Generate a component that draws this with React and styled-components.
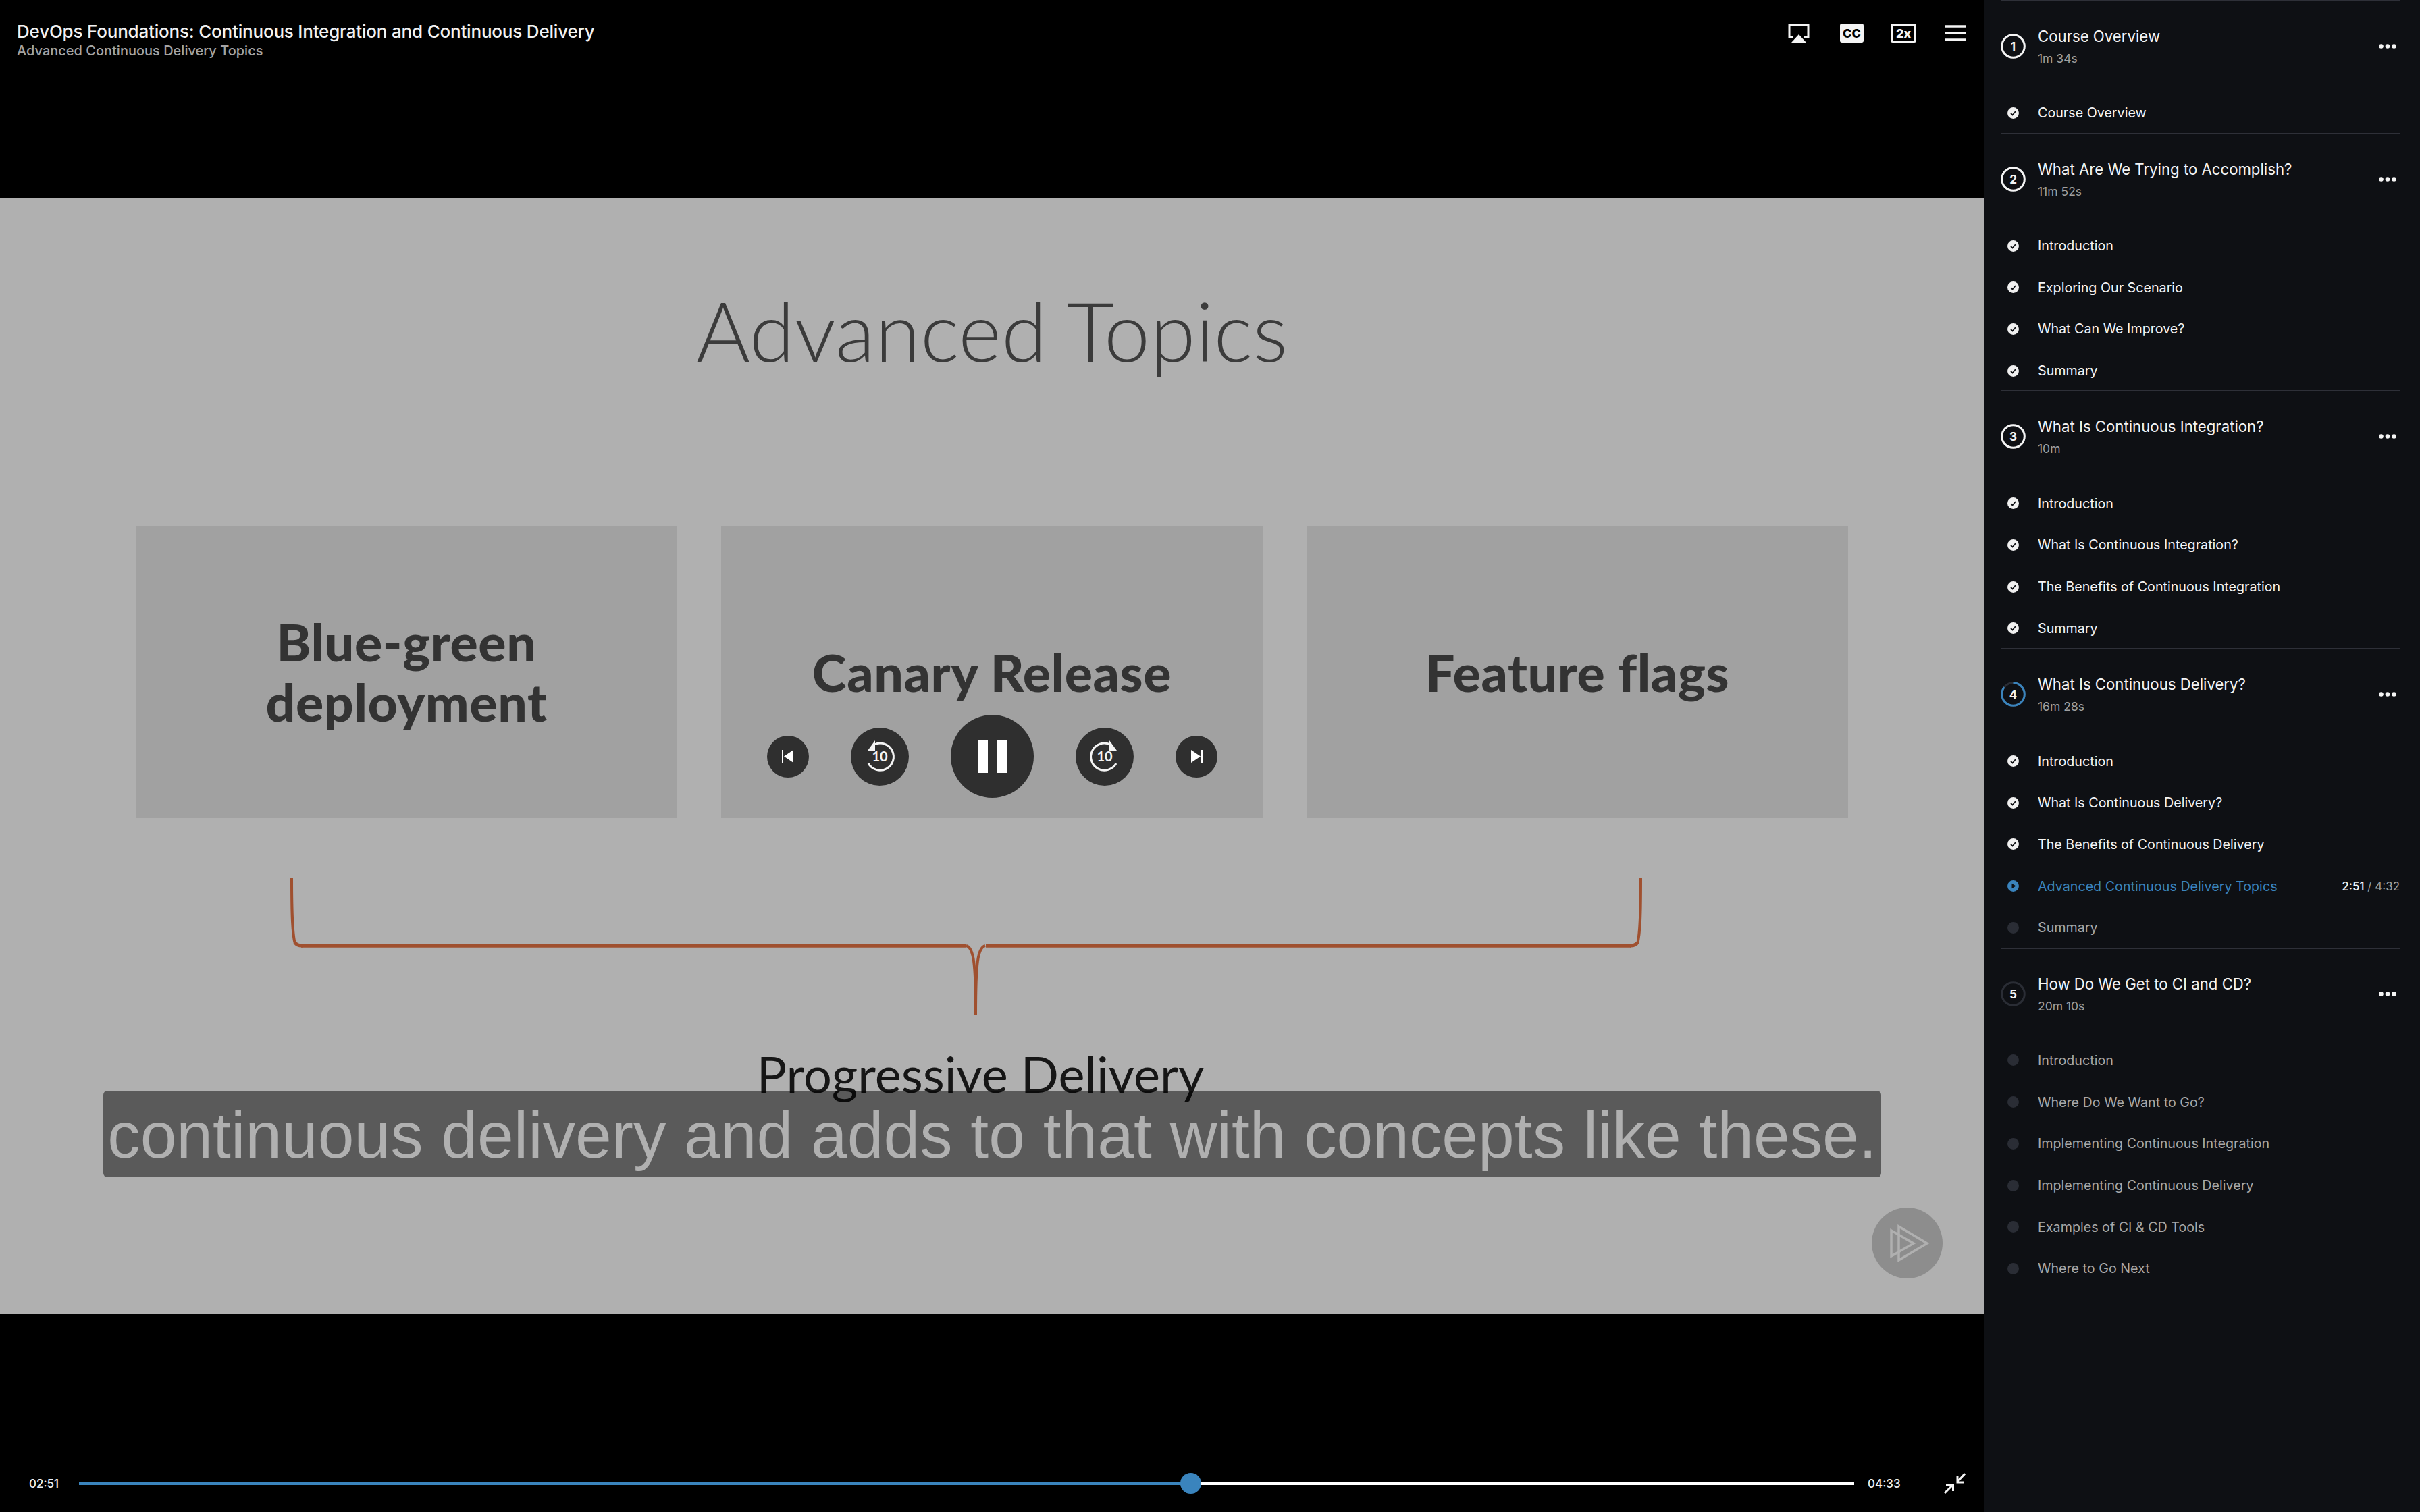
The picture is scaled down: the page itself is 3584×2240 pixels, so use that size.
import React from "react";
import styled, { createGlobalStyle } from "styled-components";

const Global = createGlobalStyle`
  html, body { margin: 0; padding: 0; background: #000; }
  * { box-sizing: border-box; }
`;

const modules = [
  { n: 1, title: "Course Overview", time: "1m 34s", ring: 1, lessons: [["Course Overview", "done"]] },
  { n: 2, title: "What Are We Trying to Accomplish?", time: "11m 52s", ring: 1, lessons: [["Introduction", "done"], ["Exploring Our Scenario", "done"], ["What Can We Improve?", "done"], ["Summary", "done"]] },
  { n: 3, title: "What Is Continuous Integration?", time: "10m", ring: 1, lessons: [["Introduction", "done"], ["What Is Continuous Integration?", "done"], ["The Benefits of Continuous Integration", "done"], ["Summary", "done"]] },
  { n: 4, title: "What Is Continuous Delivery?", time: "16m 28s", ring: 0.85, color: "#3a84bd", lessons: [["Introduction", "done"], ["What Is Continuous Delivery?", "done"], ["The Benefits of Continuous Delivery", "done"], ["Advanced Continuous Delivery Topics", "current"], ["Summary", "todo"]] },
  { n: 5, title: "How Do We Get to CI and CD?", time: "20m 10s", ring: 0, lessons: [["Introduction", "todo"], ["Where Do We Want to Go?", "todo"], ["Implementing Continuous Integration", "todo"], ["Implementing Continuous Delivery", "todo"], ["Examples of CI & CD Tools", "todo"], ["Where to Go Next", "todo"]] },
];

const Page = styled.div`
  display: grid;
  grid-template-columns: 2938px 646px;
  width: 3584px;
  height: 2240px;
  overflow: hidden;
  background: #000;
  font-family: Inter, "Liberation Sans", sans-serif;
`;
const Main = styled.main`
  display: flex;
  flex-direction: column;
  min-width: 0;
`;
const Header = styled.header`
  height: 294px;
  flex: none;
  display: flex;
  justify-content: space-between;
  align-items: flex-start;
  padding: 32px 27px 0 25px;
`;
const CourseTitle = styled.div`
  color: #f2f2f2;
  font-size: 26px;
  font-weight: 500;
  line-height: 30px;
  letter-spacing: -0.2px;
`;
const ClipTitle = styled.div`
  color: #a3a3a3;
  font-size: 20px;
  font-weight: 500;
  line-height: 22px;
  margin-top: 2px;
`;
const Tools = styled.div`
  display: flex;
  align-items: center;
  margin-top: 3px;
`;
const ToolSlot = styled.div`
  display: flex;
  margin-left: ${(p) => p.$gap}px;
`;
const Badge = styled.div`
  width: ${(p) => p.$w}px;
  height: 28px;
  border-radius: 3px;
  border: 3px solid #f4f4f4;
  background: ${(p) => (p.$solid ? "#f4f4f4" : "transparent")};
  color: ${(p) => (p.$solid ? "#000" : "#f4f4f4")};
  font-size: 18px;
  font-weight: 800;
  display: flex;
  align-items: center;
  justify-content: center;
`;
const Slide = styled.section`
  position: relative;
  height: 1653px;
  flex: none;
  background: #b0b0b0;
  padding-top: 130px;
  font-family: Lato, "Liberation Sans", sans-serif;
`;
const SlideTitle = styled.h1`
  margin: 0;
  height: 356px;
  text-align: center;
  font-size: 122px;
  font-weight: 300;
  line-height: 130px;
  color: #3b3b3b;
`;
const Cards = styled.div`
  display: grid;
  grid-template-columns: repeat(3, 802px);
  gap: 65px;
  padding-left: 201px;
`;
const Card = styled.div`
  height: 432px;
  background: #a1a1a1;
  color: #333;
  display: flex;
  align-items: center;
  justify-content: center;
  text-align: center;
  font-size: 77px;
  font-weight: 900;
  letter-spacing: 0.6px;
  line-height: 89px;
  padding-bottom: 2px;
`;
const Brace = styled.svg`
  display: block;
  margin: 84px 0 0 420px;
`;
const Progressive = styled.div`
  text-align: center;
  margin: 44px 0 0 -34px;
  color: #161616;
  font-size: 74px;
  line-height: 86px;
  font-weight: 400;
`;
const Controls = styled.div`
  position: absolute;
  left: 1136px;
  top: 765px;
  height: 123px;
  display: flex;
  align-items: center;
  gap: 62px;
`;
const RoundButton = styled.div`
  width: ${(p) => p.$d}px;
  height: ${(p) => p.$d}px;
  border-radius: 50%;
  background: #2f2f2f;
  display: flex;
  align-items: center;
  justify-content: center;
  gap: 13px;
`;
const PauseBar = styled.span`
  width: 15px;
  height: 49px;
  background: #fff;
`;
const Caption = styled.div`
  position: absolute;
  left: 153px;
  top: 1322px;
  width: 2633px;
  height: 128px;
  border-radius: 6px;
  background: rgba(0, 0, 0, 0.49);
  color: #b0b0b0;
  font-family: "Liberation Sans", Arial, sans-serif;
  font-size: 96.6px;
  line-height: 131px;
  text-align: center;
  white-space: nowrap;
`;
const Logo = styled.svg`
  position: absolute;
  left: 2772px;
  top: 1495px;
`;
const Footer = styled.footer`
  flex: 1;
  display: flex;
  align-items: flex-start;
  padding: 235px 27px 0 43px;
`;
const Row = styled.div`
  display: flex;
  align-items: center;
  height: 31px;
  width: 100%;
`;
const Stamp = styled.span`
  color: #f0f0f0;
  font-size: 17px;
  font-weight: 500;
  width: ${(p) => p.$w}px;
  flex: none;
`;
const Track = styled.div`
  position: relative;
  flex: 1;
  height: 4px;
  background: #fff;
  margin-right: 20px;
`;
const Fill = styled.div`
  height: 100%;
  background: #3a84bd;
`;
const Thumb = styled.div`
  position: absolute;
  top: -14px;
  width: 31px;
  height: 31px;
  margin-left: -16px;
  border-radius: 50%;
  background: #3a84bd;
`;
const Sidebar = styled.aside`
  background: #0e1014;
  padding: 0 30px 0 25px;
`;
const Module = styled.section`
  border-top: 2px solid #2e3038;
`;
const ModuleHead = styled.div`
  height: 133px;
  display: flex;
  align-items: center;
`;
const Ring = styled.svg`
  flex: none;
  display: block;
`;
const ModuleText = styled.div`
  flex: 1;
  margin-left: 18px;
`;
const ModuleTitle = styled.div`
  color: #f4f4f4;
  font-size: 22.2px;
  line-height: 30px;
`;
const ModuleTime = styled.div`
  color: #a0a0a0;
  font-size: 17.5px;
  line-height: 22px;
  margin-top: 7px;
`;
const Dots = styled.svg`
  flex: none;
  margin-right: 5px;
`;
const Lesson = styled.div`
  height: 61.7px;
  padding-top: 3px;
  display: flex;
  align-items: center;
  font-size: 19.7px;
  color: ${(p) => (p.$state === "current" ? "#3a84bd" : p.$state === "todo" ? "#a8a8a8" : "#f4f4f4")};
`;
const LessonIcon = styled.svg`
  flex: none;
  margin: 0 28px 0 10px;
`;
const LessonName = styled.span`
  flex: 1;
`;
const Progress = styled.span`
  color: #a0a0a0;
  font-size: 17px;
  b {
    color: #f4f4f4;
    font-weight: 500;
  }
`;

function Airplay() {
  return (
    <svg width="32" height="28" viewBox="0 0 32 28">
      <path d="M8 20H2V2H30V20H24" fill="none" stroke="#f4f4f4" strokeWidth="3" />
      <path d="M16 16L27 28H5Z" fill="#f4f4f4" />
    </svg>
  );
}
function Menu() {
  return (
    <svg width="31" height="24" viewBox="0 0 31 24">
      <path d="M0 2H31M0 12H31M0 22H31" stroke="#f4f4f4" strokeWidth="3.6" />
    </svg>
  );
}
function Collapse() {
  return (
    <svg width="32" height="31" viewBox="0 0 32 31">
      <g fill="none" stroke="#f4f4f4" strokeWidth="3">
        <path d="M31 1L20 13M20 4V14H30" />
        <path d="M1 30L13 18M3 18H13.5V27" />
      </g>
    </svg>
  );
}
function SkipIcon({ flip }) {
  return (
    <svg width="18" height="19" viewBox="0 0 18 19" style={flip ? { transform: "scaleX(-1)" } : undefined}>
      <path d="M0 0H2V19H0ZM17 0V19L3 9.5Z" fill="#fff" />
    </svg>
  );
}
function TenIcon({ flip }) {
  const arc = flip ? "M51 25A20 20 0 1 0 60 53" : "M35 25A20 20 0 1 1 26 53";
  const head = flip ? "M50 19V34H61Z" : "M36 19V34H25Z";
  return (
    <svg width="86" height="86" viewBox="0 0 86 86">
      <path d={arc} fill="none" stroke="#f4f4f4" strokeWidth="3" />
      <path d={head} fill="#f4f4f4" />
      <text x="43" y="50" textAnchor="middle" fontSize="20" fontWeight="700" fontFamily="Lato, sans-serif" fill="#f4f4f4">10</text>
    </svg>
  );
}
function ModuleRing({ n, ring, color }) {
  const r = 16.8;
  const c = 2 * Math.PI * r;
  return (
    <Ring width="37" height="37" viewBox="0 0 37 37">
      <circle cx="18.5" cy="18.5" r={r} fill="none" stroke="#2a2d35" strokeWidth="3" />
      {ring > 0 && (
        <circle cx="18.5" cy="18.5" r={r} fill="none" stroke={color || "#f4f4f4"} strokeWidth="3" strokeDasharray={`${c * ring} ${c}`} transform="rotate(-90 18.5 18.5)" />
      )}
      <text x="18.5" y="24.5" textAnchor="middle" fontSize="17" fontWeight="700" fill="#f4f4f4">{n}</text>
    </Ring>
  );
}
function StateIcon({ state }) {
  return (
    <LessonIcon width="17" height="17" viewBox="0 0 17 17">
      {state === "done" && (
        <>
          <circle cx="8.5" cy="8.5" r="8.5" fill="#f0f0f0" />
          <path d="M5 9L7.5 11.5L12 6" fill="none" stroke="#0e1014" strokeWidth="1.8" />
        </>
      )}
      {state === "current" && (
        <>
          <circle cx="8.5" cy="8.5" r="8.5" fill="#3a84bd" />
          <path d="M6.5 4.8L12.5 8.5L6.5 12.2Z" fill="#0e1014" />
        </>
      )}
      {state === "todo" && <circle cx="8.5" cy="8.5" r="8.5" fill="#2a2d35" />}
    </LessonIcon>
  );
}

export default function App() {
  return (
    <Page>
      <Global />
      <Main>
        <Header>
          <div>
            <CourseTitle>DevOps Foundations: Continuous Integration and Continuous Delivery</CourseTitle>
            <ClipTitle>Advanced Continuous Delivery Topics</ClipTitle>
          </div>
          <Tools>
            <Airplay />
            <ToolSlot $gap={45}><Badge $w={35} $solid>CC</Badge></ToolSlot>
            <ToolSlot $gap={40}><Badge $w={38}>2x</Badge></ToolSlot>
            <ToolSlot $gap={42}><Menu /></ToolSlot>
          </Tools>
        </Header>
        <Slide>
          <SlideTitle>Advanced Topics</SlideTitle>
          <Cards>
            <Card>Blue-green<br />deployment</Card>
            <Card>Canary Release</Card>
            <Card>Feature flags</Card>
          </Cards>
          <Brace width="2024" height="208" viewBox="0 0 2024 208">
            <g fill="none" stroke="#a0502f">
              <path d="M12 5C12 60 13 88 17 102" strokeWidth="4" />
              <path d="M2010 5C2010 60 2009 88 2005 102" strokeWidth="4" />
              <path d="M26 105H1010M1040 105H1996" strokeWidth="5.5" />
              <path d="M17 100Q19 105 28 105M2005 100Q2003 105 1994 105" strokeWidth="5" />
              <path d="M1011 105C1022 108 1025 130 1025 207C1025 130 1028 108 1039 105" strokeWidth="4" />
            </g>
          </Brace>
          <Progressive>Progressive Delivery</Progressive>
          <Controls>
            <RoundButton $d={62}><SkipIcon /></RoundButton>
            <RoundButton $d={86}><TenIcon /></RoundButton>
            <RoundButton $d={123}><PauseBar /><PauseBar /></RoundButton>
            <RoundButton $d={86}><TenIcon flip /></RoundButton>
            <RoundButton $d={62}><SkipIcon flip /></RoundButton>
          </Controls>
          <Caption>continuous delivery and adds to that with concepts like these.</Caption>
          <Logo width="105" height="105" viewBox="0 0 105 105">
            <circle cx="52.5" cy="52.5" r="52.5" fill="#8d8d8d" />
            <g fill="none" stroke="#b0b0b0" strokeWidth="3.5">
              <path d="M40 28L82 53L40 78Z" />
              <path d="M29 34L62 53L29 72Z" />
            </g>
          </Logo>
        </Slide>
        <Footer>
          <Row>
            <Stamp $w={74}>02:51</Stamp>
            <Track>
              <Fill style={{ width: `${(171 / 273) * 100}%` }} />
              <Thumb style={{ left: `${(171 / 273) * 100}%` }} />
            </Track>
            <Stamp $w={113}>04:33</Stamp>
            <Collapse />
          </Row>
        </Footer>
      </Main>
      <Sidebar>
        {modules.map((m) => (
          <Module key={m.n}>
            <ModuleHead>
              <ModuleRing n={m.n} ring={m.ring} color={m.color} />
              <ModuleText>
                <ModuleTitle>{m.title}</ModuleTitle>
                <ModuleTime>{m.time}</ModuleTime>
              </ModuleText>
              <Dots width="26" height="7" viewBox="0 0 26 7">
                <circle cx="3.5" cy="3.5" r="3.3" fill="#f4f4f4" />
                <circle cx="13" cy="3.5" r="3.3" fill="#f4f4f4" />
                <circle cx="22.5" cy="3.5" r="3.3" fill="#f4f4f4" />
              </Dots>
            </ModuleHead>
            {m.lessons.map(([name, state]) => (
              <Lesson key={name} $state={state}>
                <StateIcon state={state} />
                <LessonName>{name}</LessonName>
                {state === "current" && <Progress><b>2:51</b> / 4:32</Progress>}
              </Lesson>
            ))}
          </Module>
        ))}
      </Sidebar>
    </Page>
  );
}
